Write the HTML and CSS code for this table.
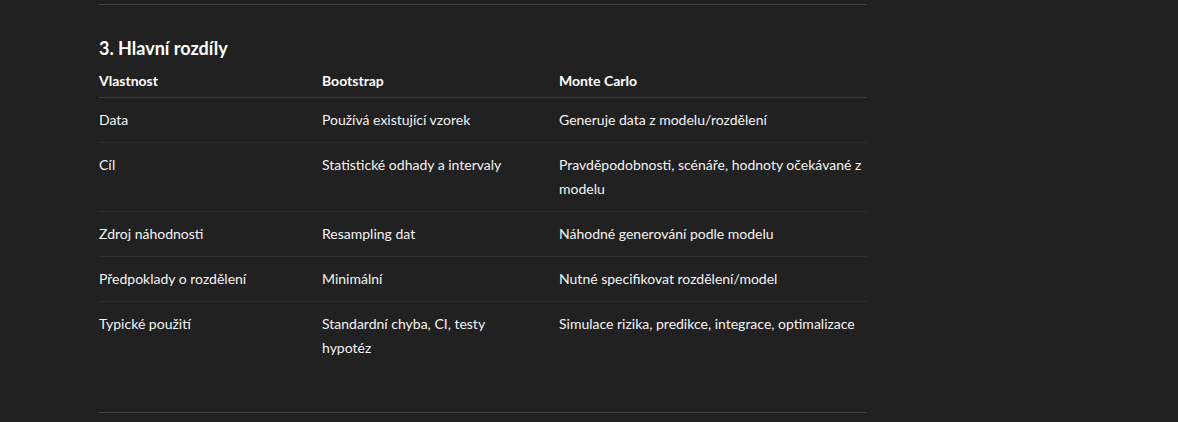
FILE: index.html
```html
<!DOCTYPE html>
<html lang="cs">
<head>
<meta charset="utf-8">
<link rel="stylesheet" href="styles.css">
</head>
<body>
<main class="content">
  <hr class="rule">
  <h3 class="section-title">3. Hlavní rozdíly</h3>
  <table class="compare">
    <thead>
      <tr><th class="c1">Vlastnost</th><th class="c2">Bootstrap</th><th class="c3">Monte Carlo</th></tr>
    </thead>
    <tbody>
      <tr><td>Data</td><td>Používá existující vzorek</td><td>Generuje data z modelu/rozdělení</td></tr>
      <tr><td>Cíl</td><td>Statistické odhady a intervaly</td><td>Pravděpodobnosti, scénáře, hodnoty očekávané z modelu</td></tr>
      <tr><td>Zdroj náhodnosti</td><td>Resampling dat</td><td>Náhodné generování podle modelu</td></tr>
      <tr><td>Předpoklady o rozdělení</td><td>Minimální</td><td>Nutné specifikovat rozdělení/model</td></tr>
      <tr><td>Typické použití</td><td>Standardní chyba, CI, testy hypotéz</td><td>Simulace rizika, predikce, integrace, optimalizace</td></tr>
    </tbody>
  </table>
  <hr class="rule bottom">
</main>
</body>
</html>
```
FILE: styles.css
```css
html, body {
  margin: 0;
  padding: 0;
  background: #212121;
}
body {
  font-family: Lato, "Noto Sans", sans-serif;
  color: #f3f3f3;
  font-size: 14px;
}
.content {
  width: 768px;
  margin-left: 99px;
  padding-top: 4px;
}
.rule {
  margin: 0;
  border: 0;
  height: 1px;
  background: #424242;
}
.section-title {
  margin: 29px 0 7px;
  font-size: 18px;
  line-height: 28px;
  font-weight: 700;
  color: #ffffff;
}
.compare {
  width: 768px;
  border-collapse: collapse;
  table-layout: fixed;
  line-height: 24px;
}
.compare th {
  text-align: left;
  font-weight: 700;
  color: #ffffff;
  padding: 0 16px 4px;
  border-bottom: 1px solid #3d3d3d;
  vertical-align: top;
}
.compare td {
  padding: 10px 16px;
  border-bottom: 1px solid #2e2e2e;
  vertical-align: top;
}
.compare tr > :first-child { padding-left: 0; }
.compare tr > :last-child { padding-right: 0; }
.compare tbody tr:last-child td { border-bottom: 0; }
.c1 { width: 191px; }
.c2 { width: 205px; }
.c3 { width: 308px; }
.rule.bottom { margin-top: 42px; }
```
